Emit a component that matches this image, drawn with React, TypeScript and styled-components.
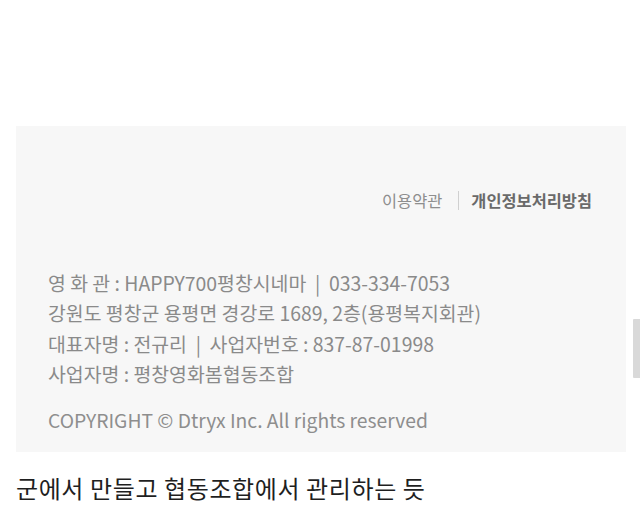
import * as React from 'react'
import styled, { createGlobalStyle } from 'styled-components'

const Global = createGlobalStyle`
  html, body {
    margin: 0;
    padding: 0;
    background: #ffffff;
    font-family: "Noto Sans CJK KR", "Noto Sans", sans-serif;
  }
`

const Page = styled.div`
  width: 640px;
  height: 532px;
  position: relative;
  overflow: hidden;
  background: #ffffff;
`

const Spacer = styled.div`
  height: 126px;
`

const Footer = styled.footer`
  margin: 0 14px 0 16px;
  height: 326px;
  background: #f7f7f7;
  box-sizing: border-box;
  padding: 64px 34px 0 32px;
`

const Links = styled.div`
  display: flex;
  justify-content: flex-end;
  align-items: center;
  font-size: 16.4px;
  line-height: 20px;
`

const LinkItem = styled.a<{ $strong?: boolean }>`
  color: ${(p) => (p.$strong ? '#6a6a6a' : '#8e8e8e')};
  font-weight: ${(p) => (p.$strong ? 700 : 400)};
  text-decoration: none;
`

const Divider = styled.span`
  width: 1px;
  height: 19px;
  background: #d0d0d0;
  margin: 0 12px 0 16px;
`

const Info = styled.div`
  margin-top: 58px;
  display: flex;
  flex-direction: column;
  font-size: 19.4px;
  line-height: 30.4px;
  color: #8a8a8a;
`

const Copyright = styled.div`
  margin-top: 15px;
  font-size: 19.3px;
  line-height: 30px;
  color: #8e8e8e;
`

const Caption = styled.p`
  margin: 21px 0 0 16px;
  font-size: 24px;
  line-height: 30px;
  color: #1f1f1f;
  letter-spacing: 0.6px;
`

const ScrollThumb = styled.div`
  position: absolute;
  right: 0;
  top: 319px;
  width: 7px;
  height: 59px;
  background: #d9d9d9;
  border-radius: 1px 0 0 1px;
`

export default function App() {
  return (
    <Page>
      <Global />
      <Spacer />
      <Footer>
        <Links>
          <LinkItem>이용약관</LinkItem>
          <Divider />
          <LinkItem $strong>개인정보처리방침</LinkItem>
        </Links>
        <Info>
          <span>영 화 관 : HAPPY700평창시네마 &nbsp;|&nbsp; 033-334-7053</span>
          <span>강원도 평창군 용평면 경강로 1689, 2층(용평복지회관)</span>
          <span>대표자명 : 전규리 &nbsp;|&nbsp; 사업자번호 : 837-87-01998</span>
          <span>사업자명 : 평창영화봄협동조합</span>
        </Info>
        <Copyright>COPYRIGHT © Dtryx Inc. All rights reserved</Copyright>
      </Footer>
      <Caption>군에서 만들고 협동조합에서 관리하는 듯</Caption>
      <ScrollThumb />
    </Page>
  )
}
